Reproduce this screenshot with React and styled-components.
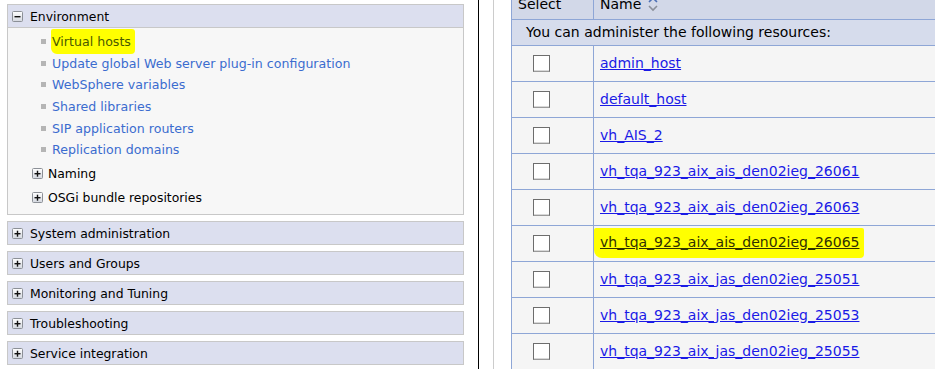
import React from "react";
import styled, { createGlobalStyle } from "styled-components";

const GlobalStyle = createGlobalStyle`
  html, body {
    margin: 0;
    padding: 0;
    background: #ffffff;
    font-family: "DejaVu Sans", Verdana, sans-serif;
  }
`;

const navLinks = [
  { label: "Virtual hosts", marked: true },
  { label: "Update global Web server plug-in configuration" },
  { label: "WebSphere variables" },
  { label: "Shared libraries" },
  { label: "SIP application routers" },
  { label: "Replication domains" },
];

const subGroups = ["Naming", "OSGi bundle repositories"];

const sections = [
  "System administration",
  "Users and Groups",
  "Monitoring and Tuning",
  "Troubleshooting",
  "Service integration",
];

const hosts = [
  { name: "admin_host" },
  { name: "default_host" },
  { name: "vh_AIS_2" },
  { name: "vh_tqa_923_aix_ais_den02ieg_26061" },
  { name: "vh_tqa_923_aix_ais_den02ieg_26063" },
  { name: "vh_tqa_923_aix_ais_den02ieg_26065", marked: true },
  { name: "vh_tqa_923_aix_jas_den02ieg_25051" },
  { name: "vh_tqa_923_aix_jas_den02ieg_25053" },
  { name: "vh_tqa_923_aix_jas_den02ieg_25055" },
];

const ToggleIcon = ({ open }) => (
  <svg width="11" height="11" viewBox="0 0 11 11">
    <defs>
      <linearGradient id="tg" x1="0" y1="0" x2="0" y2="1">
        <stop offset="0" stopColor="#ffffff" />
        <stop offset="1" stopColor="#d4d8e0" />
      </linearGradient>
    </defs>
    <rect x="0.5" y="0.5" width="10" height="10" rx="1" fill="url(#tg)" stroke="#8c9097" />
    <rect x="2.5" y="5" width="6" height="1.4" fill="#111" />
    {!open && <rect x="4.8" y="2.7" width="1.4" height="6" fill="#111" />}
  </svg>
);

const SortIcon = () => (
  <svg width="12" height="16" viewBox="0 0 12 16">
    <path d="M2 6 L6 2 L10 6" fill="none" stroke="#4b6fb5" strokeWidth="1.6" />
    <path d="M2 10 L6 14 L10 10" fill="none" stroke="#8a8f99" strokeWidth="1.6" />
  </svg>
);

export default function App() {
  return (
    <>
      <GlobalStyle />
      <Screen>
        <NavFrame>
          <Panel>
            <PanelHeader>
              <ToggleIcon open />
              <span>Environment</span>
            </PanelHeader>
            <PanelBody>
              <LinkList>
                {navLinks.map((l) => (
                  <LinkItem key={l.label}>
                    <Bullet />
                    <NavLink $marked={l.marked}>{l.label}</NavLink>
                  </LinkItem>
                ))}
              </LinkList>
              <SubList>
                {subGroups.map((g) => (
                  <SubItem key={g}>
                    <ToggleIcon />
                    <span>{g}</span>
                  </SubItem>
                ))}
              </SubList>
            </PanelBody>
          </Panel>
          {sections.map((s) => (
            <Section key={s}>
              <ToggleIcon />
              <span>{s}</span>
            </Section>
          ))}
        </NavFrame>
        <ContentFrame>
          <Viewport>
            <Table>
              <thead>
                <tr>
                  <Th $w={82}>Select</Th>
                  <Th>
                    <NameHead>
                      Name <SortIcon />
                    </NameHead>
                  </Th>
                </tr>
              </thead>
              <tbody>
                <tr>
                  <Caption colSpan={2}>You can administer the following resources:</Caption>
                </tr>
                {hosts.map((h) => (
                  <Row key={h.name}>
                    <CheckCell>
                      <Box />
                    </CheckCell>
                    <NameCell>
                      <HostLink $marked={h.marked}>{h.name}</HostLink>
                    </NameCell>
                  </Row>
                ))}
              </tbody>
            </Table>
          </Viewport>
        </ContentFrame>
      </Screen>
    </>
  );
}

const Screen = styled.div`
  display: flex;
  width: 935px;
  height: 369px;
  overflow: hidden;
`;

const NavFrame = styled.div`
  width: 471px;
  flex: none;
  padding: 4px 0 0 7px;
  border-right: 1px solid #000;
  display: flex;
  flex-direction: column;
  gap: 6px;
`;

const Panel = styled.div`
  width: 455px;
  border: 1px solid #c8c8c8;
  background: #f7f7f7;
  margin-bottom: 0;
`;

const PanelHeader = styled.div`
  height: 22px;
  background: #dcdfef;
  border-bottom: 1px solid #c8c8c8;
  display: flex;
  align-items: center;
  gap: 7px;
  padding-left: 4px;
  font-size: 12.4px;
  color: #000;
`;

const PanelBody = styled.div`
  padding: 3px 0 0 0;
  height: 186px;
  box-sizing: border-box;
`;

const LinkList = styled.ul`
  list-style: none;
  margin: 0;
  padding: 0 0 0 33px;
`;

const LinkItem = styled.li`
  display: flex;
  align-items: center;
  height: 21.6px;
  gap: 6px;
  font-size: 12.6px;
`;

const Bullet = styled.span`
  width: 5px;
  height: 5px;
  background: #b5b5b5;
  flex: none;
`;

const NavLink = styled.span`
  background: ${(p) => (p.$marked ? "#ffff00" : "transparent")};
  color: ${(p) => (p.$marked ? "#4a5a00" : "#3b6ccf")};
  padding: ${(p) => (p.$marked ? "5px 4px 5px 1px" : "0")};
  margin-left: ${(p) => (p.$marked ? "-1px" : "0")};
  border-radius: ${(p) => (p.$marked ? "2px 3px 4px 6px" : "0")};
`;

const SubList = styled.div`
  padding: 1px 0 0 24px;
  display: flex;
  flex-direction: column;
`;

const SubItem = styled.div`
  display: flex;
  align-items: center;
  gap: 5px;
  height: 24px;
  font-size: 12.4px;
  color: #000;
`;

const Section = styled.div`
  width: 451px;
  height: 22px;
  border: 1px solid #c8c8c8;
  background: #dcdfef;
  display: flex;
  align-items: center;
  gap: 7px;
  padding-left: 4px;
  font-size: 12.4px;
  color: #000;
`;

const ContentFrame = styled.div`
  flex: 1;
  padding-left: 14px;
  display: flex;
`;

const Viewport = styled.div`
  flex: 1;
  border-left: 1px solid #cccccc;
  padding-left: 17px;
  overflow: hidden;
`;

const Table = styled.table`
  border-collapse: collapse;
  width: 440px;
  margin-top: -10px;
  font-size: 14px;
  border-left: 1px solid #8ea6d6;
`;

const Th = styled.th`
  box-sizing: border-box;
  width: ${(p) => (p.$w ? `${p.$w}px` : "auto")};
  height: 29px;
  background: #d2d8e8;
  border-right: 1px solid #8ea6d6;
  text-align: left;
  font-weight: normal;
  padding: 0 0 0 6px;
  color: #000;
  vertical-align: middle;
`;

const NameHead = styled.span`
  display: inline-flex;
  align-items: center;
  gap: 6px;
`;

const Caption = styled.td`
  height: 25px;
  background: #d6dcec;
  border-top: 1px solid #8ea6d6;
  border-bottom: 1px solid #8ea6d6;
  padding: 0 0 0 14px;
  color: #000;
`;

const Row = styled.tr`
  height: 36px;
  background: #f5f5f5;
  border-bottom: 1px solid #8ea6d6;
`;

const CheckCell = styled.td`
  border-right: 1px solid #8ea6d6;
  padding: 0 0 0 21px;
  vertical-align: middle;
`;

const Box = styled.span`
  display: block;
  width: 15px;
  height: 15px;
  background: #fff;
  border: 1px solid #6d6d6d;
  border-bottom-color: #9a9a9a;
  box-shadow: inset 0 -1px 0 #d8d8d8;
`;

const NameCell = styled.td`
  padding: 0 0 0 6px;
  vertical-align: middle;
`;

const HostLink = styled.a`
  display: inline-block;
  text-decoration: underline;
  background: ${(p) => (p.$marked ? "#ffff00" : "transparent")};
  color: ${(p) => (p.$marked ? "#303000" : "#1a1ae6")};
  padding: ${(p) => (p.$marked ? "6px 5px 8px 6px" : "0")};
  margin-left: ${(p) => (p.$marked ? "-6px" : "0")};
  border-radius: ${(p) => (p.$marked ? "2px 2px 4px 8px" : "0")};
`;
